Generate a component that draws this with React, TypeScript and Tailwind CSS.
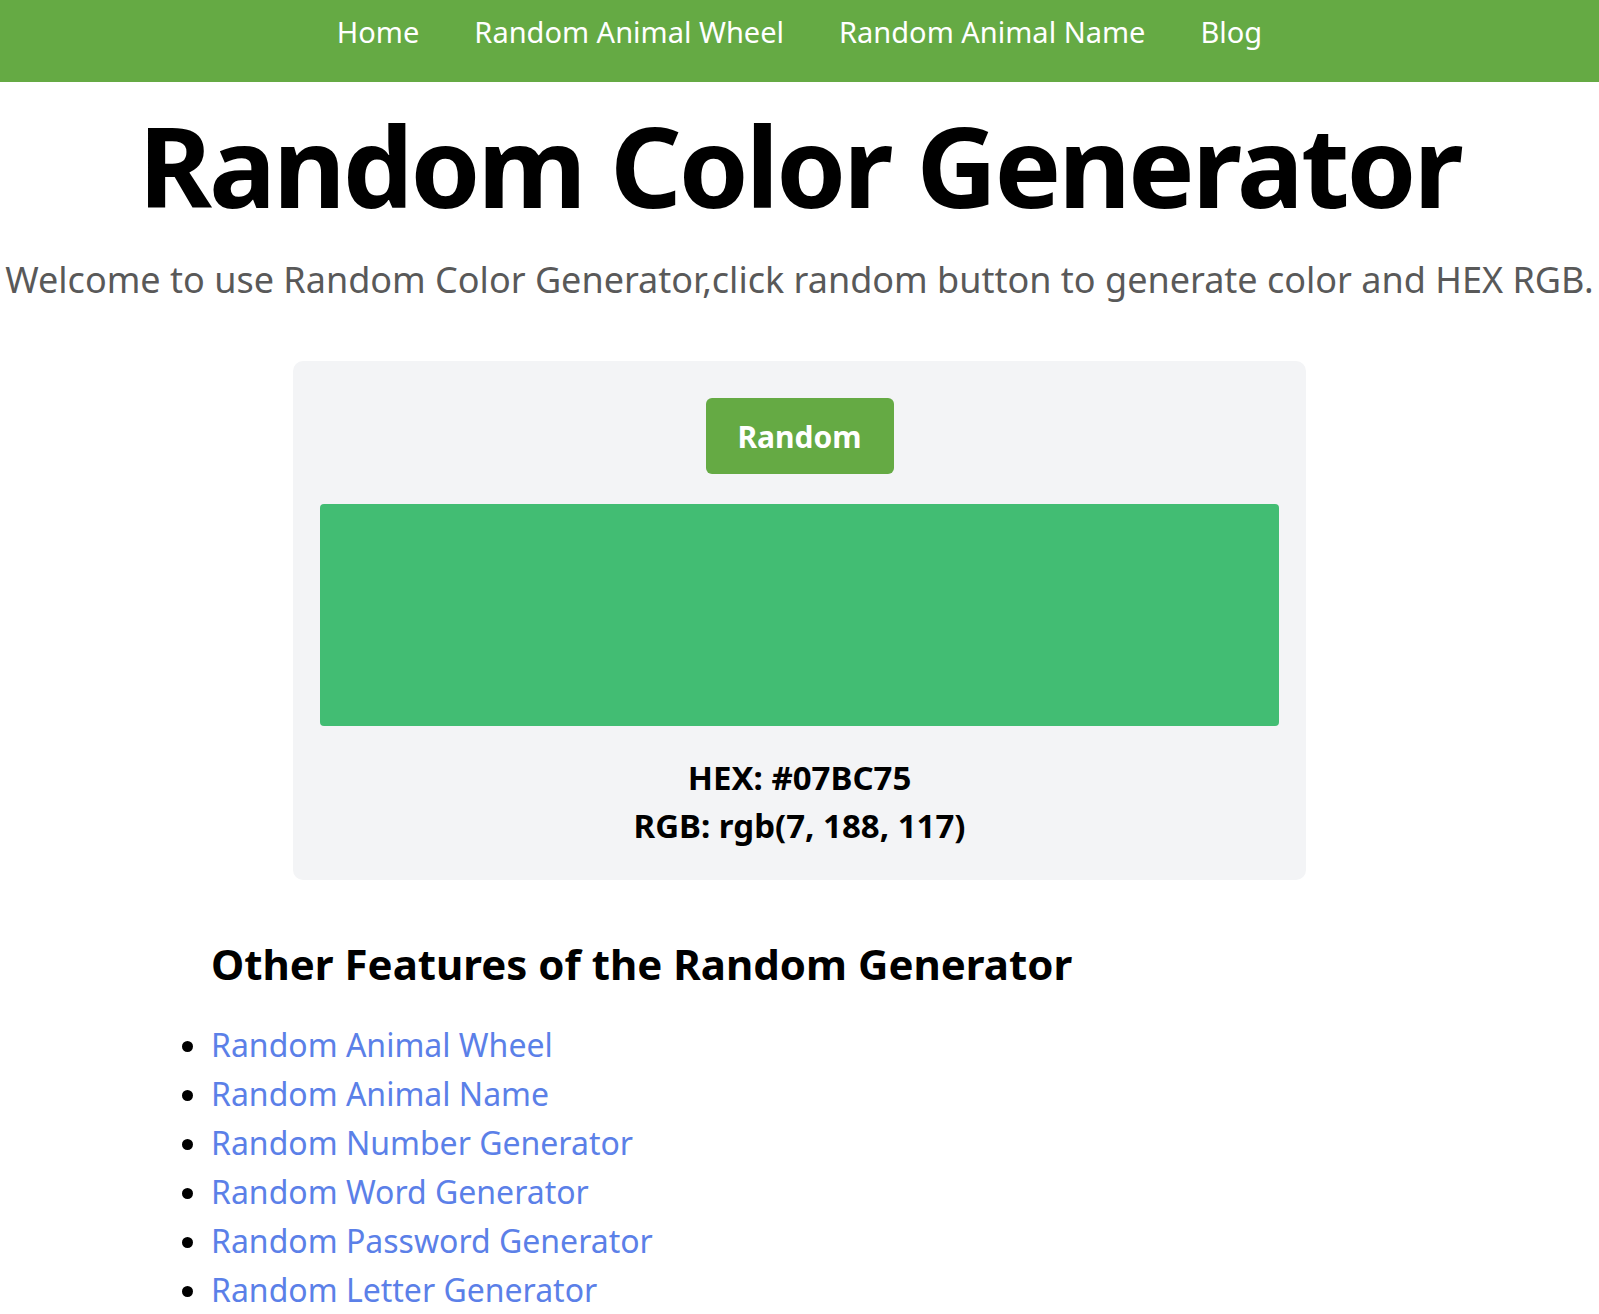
import { useState } from 'react';

const navLinks = ['Home', 'Random Animal Wheel', 'Random Animal Name', 'Blog'];

const features = [
  'Random Animal Wheel',
  'Random Animal Name',
  'Random Number Generator',
  'Random Word Generator',
  'Random Password Generator',
  'Random Letter Generator',
];

export default function App() {
  const [rgb] = useState<[number, number, number]>([7, 188, 117]);
  const hex = '#' + rgb.map(v => v.toString(16).padStart(2, '0')).join('').toUpperCase();

  return (
    <div className="min-h-screen bg-white font-['Noto_Sans',sans-serif] text-black">
      <nav className="h-[82px] bg-[#65aa44] flex justify-center gap-[55px] pt-[11px]">
        {navLinks.map(l => (
          <a key={l} href="#" className="text-[29px] leading-[42px] text-white">
            {l}
          </a>
        ))}
      </nav>

      <h1 className="mt-[27px] text-center text-[112px] leading-none font-bold tracking-[-3px]">
        Random Color Generator
      </h1>
      <p className="mt-[35px] text-center text-[36px] leading-[48px] text-[#595959] whitespace-nowrap">
        Welcome to use Random Color Generator,click random button to generate color and HEX RGB.
      </p>

      <div className="mx-auto mt-[57px] w-[1013px] rounded-[10px] bg-[#f3f4f6] px-[27px] pt-[37px] pb-[30px] flex flex-col items-center">
        <button className="w-[188px] h-[76px] rounded-[6px] bg-[#65aa44] text-white text-[30px] font-bold">
          Random
        </button>
        <div className="mt-[30px] w-full h-[222px] rounded-[4px] bg-[#42bd73]" />
        <div className="mt-[28px] text-center text-[33px] leading-[48px] font-bold">
          <p>HEX: {hex}</p>
          <p>RGB: rgb({rgb.join(', ')})</p>
        </div>
      </div>

      <div className="ml-[211px] mt-[56px]">
        <h2 className="text-[42px] leading-[56px] font-bold">Other Features of the Random Generator</h2>
        <ul className="mt-[28px] list-disc">
          {features.map(f => (
            <li key={f} className="text-[32px] leading-[49px] marker:text-black">
              <a href="#" className="text-[#5b80e8]">{f}</a>
            </li>
          ))}
        </ul>
      </div>
    </div>
  );
}
